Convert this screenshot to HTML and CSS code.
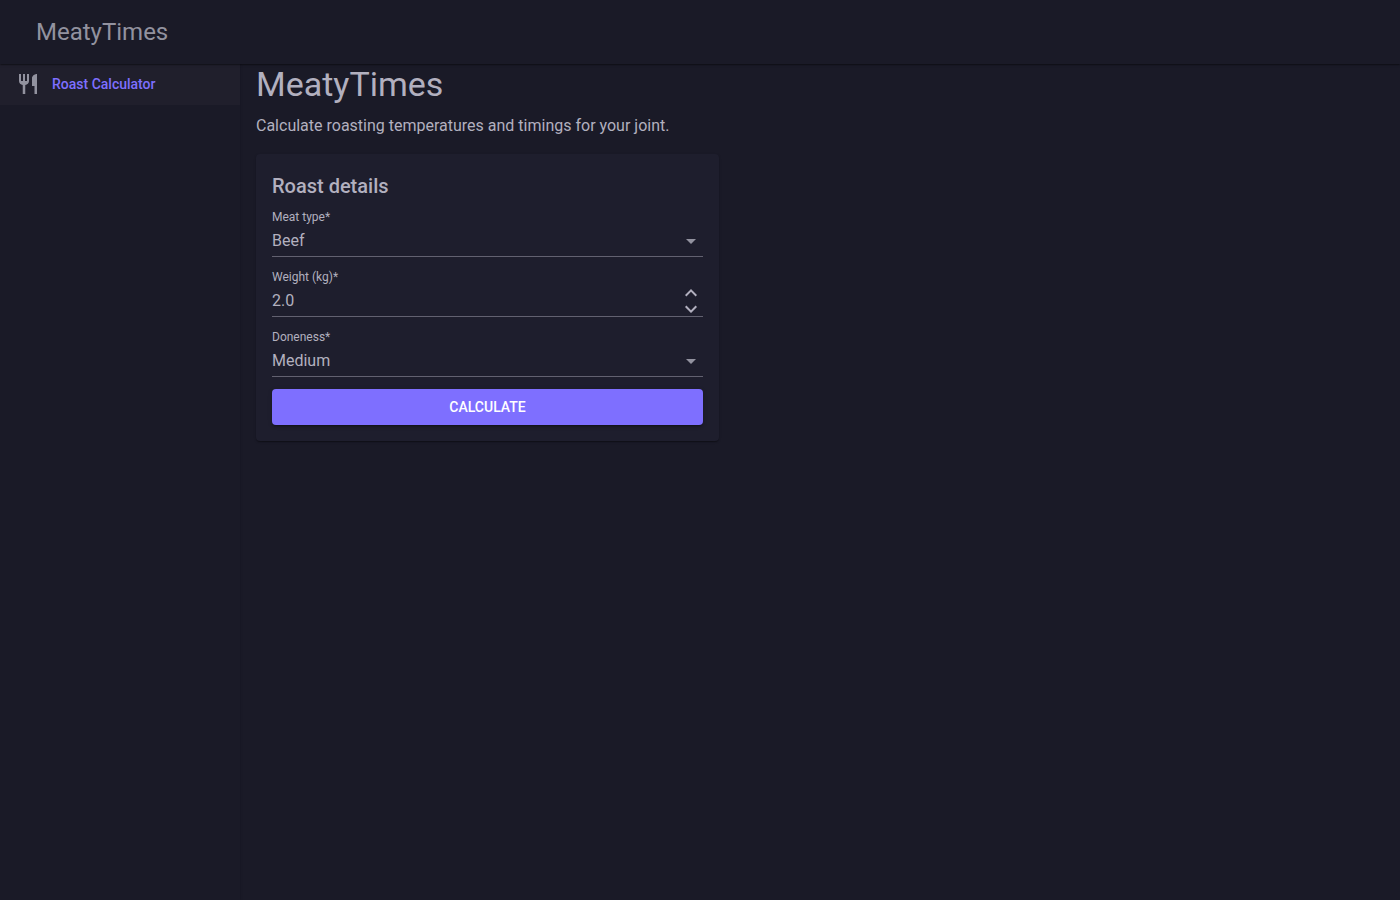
FILE: index.html
```html
<!DOCTYPE html>
<html lang="en">
<head>
<meta charset="utf-8">
<meta name="viewport" content="width=device-width, initial-scale=1">
<title>MeatyTimes</title>
<link rel="stylesheet" href="styles.css">
</head>
<body>
<header class="appbar"><span class="brand">MeatyTimes</span></header>
<div class="layout">
  <nav class="drawer">
    <a class="nav-link" href="#roast">
      <svg class="nav-icon" viewBox="0 0 24 24" aria-hidden="true"><path d="M11 9H9V2H7v7H5V2H3v7c0 2.120 1.660 3.840 3.750 3.970V22h2.500v-9.030C11.340 12.840 13 11.120 13 9V2h-2v7zm5-3v8h2.500v8H21V2c-2.760 0-5 2.240-5 4z"/></svg>
      <span>Roast Calculator</span>
    </a>
  </nav>
  <main class="content">
    <h1 class="title">MeatyTimes</h1>
    <p class="intro">Calculate roasting temperatures and timings for your joint.</p>
    <div class="grid">
      <form class="card" id="roast">
        <h2 class="card-title">Roast details</h2>
        <div class="field">
          <label class="label" for="meat">Meat type*</label>
          <div class="control">
            <select class="input" id="meat"><option>Beef</option><option>Lamb</option><option>Pork</option><option>Chicken</option></select>
            <svg class="arrow" viewBox="0 0 24 24" aria-hidden="true"><path d="M7 10l5 5 5-5z"/></svg>
          </div>
        </div>
        <div class="field">
          <label class="label" for="weight">Weight (kg)*</label>
          <div class="control">
            <input class="input" id="weight" type="text" inputmode="decimal" value="2.0">
            <div class="spin">
              <button class="step" type="button" aria-label="Increase weight"><svg class="chevron" viewBox="0 0 24 24" aria-hidden="true"><path d="M12 8l-6 6 1.410 1.410L12 10.830l4.590 4.580L18 14z"/></svg></button>
              <button class="step" type="button" aria-label="Decrease weight"><svg class="chevron" viewBox="0 0 24 24" aria-hidden="true"><path d="M16.590 8.590L12 13.170 7.410 8.590 6 10l6 6 6-6z"/></svg></button>
            </div>
          </div>
        </div>
        <div class="field">
          <label class="label" for="doneness">Doneness*</label>
          <div class="control">
            <select class="input" id="doneness"><option>Rare</option><option selected>Medium</option><option>Well done</option></select>
            <svg class="arrow" viewBox="0 0 24 24" aria-hidden="true"><path d="M7 10l5 5 5-5z"/></svg>
          </div>
        </div>
        <button class="submit" type="submit">CALCULATE</button>
      </form>
    </div>
  </main>
</div>
</body>
</html>
```
FILE: styles.css
```css
* {
  box-sizing: border-box;
}

body {
  margin: 0;
  min-height: 100vh;
  display: flex;
  flex-direction: column;
  background: #1a1a27;
  color: #b2b0bf;
  font-family: Roboto, "Liberation Sans", sans-serif;
  font-size: 16px;
  line-height: 24px;
}

.appbar {
  position: relative;
  z-index: 2;
  display: flex;
  align-items: center;
  height: 64px;
  padding: 0 36px;
  background: #1a1a27;
  color: #92929f;
  box-shadow: 0 2px 1px -1px rgba(0, 0, 0, 0.2), 0 1px 1px 0 rgba(0, 0, 0, 0.14), 0 1px 3px 0 rgba(0, 0, 0, 0.12);
}

.brand {
  font-size: 24px;
  line-height: 32px;
}

.layout {
  flex: 1;
  display: flex;
}

.drawer {
  flex: 0 0 240px;
  box-shadow: 0 2px 1px -1px rgba(0, 0, 0, 0.2), 0 1px 1px 0 rgba(0, 0, 0, 0.14), 0 1px 3px 0 rgba(0, 0, 0, 0.12);
}

.nav-link {
  display: flex;
  align-items: center;
  gap: 12px;
  padding: 8px 16px 9px;
  background: #201f2c;
  color: #7e6fff;
  font-size: 14px;
  font-weight: 500;
  text-decoration: none;
}

.nav-icon {
  width: 24px;
  height: 24px;
  fill: #92929f;
}

.content {
  flex: 1;
  min-width: 0;
  padding: 0 16px;
}

.title {
  margin: 0;
  font-size: 34px;
  font-weight: 400;
  line-height: 40px;
}

.intro {
  margin: 10px 0 16px;
}

.grid {
  display: grid;
  grid-template-columns: repeat(12, 1fr);
  gap: 12px;
}

.card {
  grid-column: span 5;
  padding: 16px;
  border-radius: 4px;
  background: #1e1e2d;
  box-shadow: 0 2px 1px -1px rgba(0, 0, 0, 0.2), 0 1px 1px 0 rgba(0, 0, 0, 0.14), 0 1px 3px 0 rgba(0, 0, 0, 0.12);
}

.card-title {
  margin: 0 0 7px;
  font-size: 20px;
  font-weight: 500;
  line-height: 32px;
}

.field {
  margin-bottom: 12px;
}

.label {
  display: block;
  font-size: 12px;
  line-height: 16px;
}

.control {
  display: flex;
  align-items: center;
  height: 32px;
  border-bottom: 1px solid #626170;
}

.input {
  flex: 1;
  min-width: 0;
  height: 31px;
  padding: 0;
  border: 0;
  outline: 0;
  appearance: none;
  background: transparent;
  color: inherit;
  font: inherit;
}

.arrow {
  width: 24px;
  height: 24px;
  fill: #92929f;
  pointer-events: none;
}

.spin {
  display: flex;
  flex-direction: column;
}

.step {
  display: flex;
  justify-content: center;
  align-items: center;
  width: 24px;
  height: 16px;
  padding: 0;
  border: 0;
  background: transparent;
}

.chevron {
  width: 24px;
  height: 24px;
  flex: none;
  fill: #b2b0bf;
}

.submit {
  display: block;
  width: 100%;
  height: 36px;
  border: 0;
  border-radius: 4px;
  background: #7e6fff;
  color: #fff;
  font: 500 14px/24px Roboto, "Liberation Sans", sans-serif;
  box-shadow: 0 3px 1px -2px rgba(0, 0, 0, 0.2), 0 2px 2px 0 rgba(0, 0, 0, 0.14), 0 1px 5px 0 rgba(0, 0, 0, 0.12);
}
```
